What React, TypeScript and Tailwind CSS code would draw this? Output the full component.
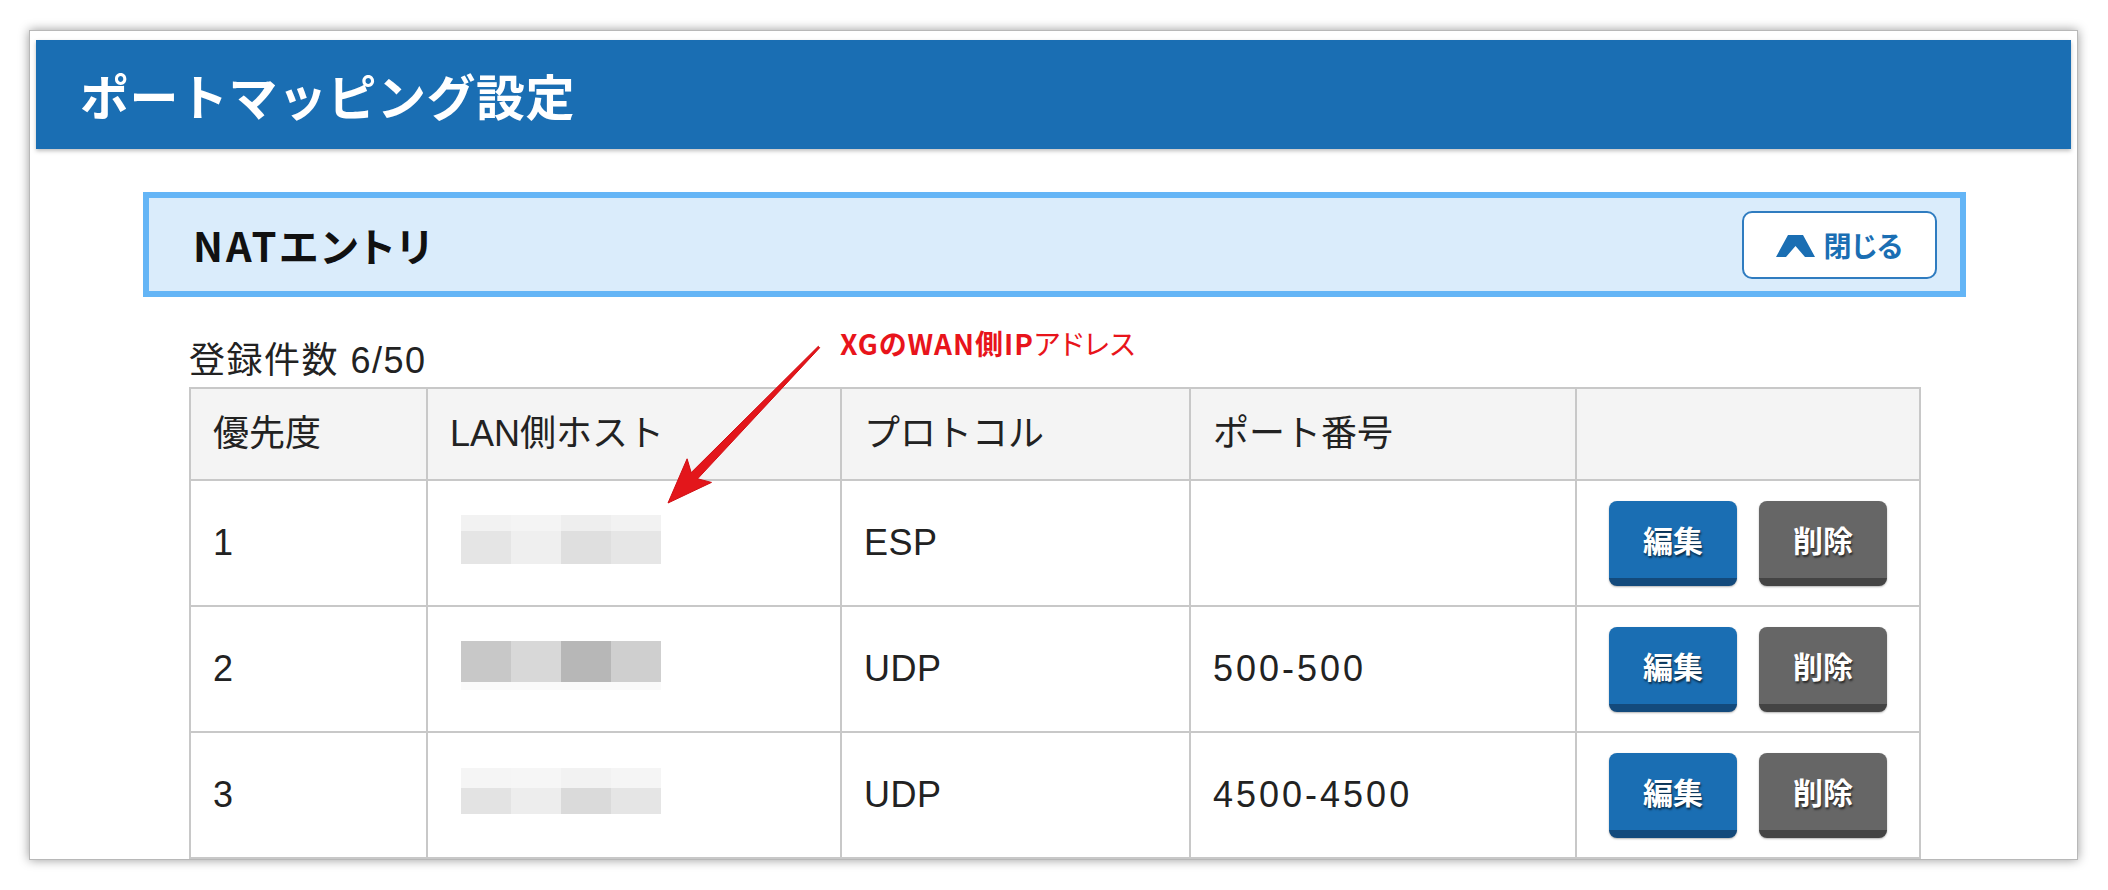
type Blur = { h: number; colors: string[] }[];

const rows: { no: string; proto: string; port: string; blur: Blur }[] = [
  {
    no: "1",
    proto: "ESP",
    port: "",
    blur: [
      { h: 16, colors: ["#f2f2f2", "#f4f4f4", "#eeeeee", "#f2f2f2"] },
      { h: 33, colors: ["#e5e5e5", "#efefef", "#dfdfdf", "#e6e6e6"] },
    ],
  },
  {
    no: "2",
    proto: "UDP",
    port: "500-500",
    blur: [
      { h: 41, colors: ["#c8c8c8", "#d8d8d8", "#b7b7b7", "#cfcfcf"] },
      { h: 8, colors: ["#fafafa", "#fafafa", "#fafafa", "#fafafa"] },
    ],
  },
  {
    no: "3",
    proto: "UDP",
    port: "4500-4500",
    blur: [
      { h: 20, colors: ["#f5f5f5", "#f6f6f6", "#f2f2f2", "#f5f5f5"] },
      { h: 26, colors: ["#e3e3e3", "#ededed", "#dadada", "#e5e5e5"] },
    ],
  },
];

const font = "font-['Liberation_Sans','Noto_Sans_CJK_JP',sans-serif]";

const BlurredHost = ({ blur }: { blur: Blur }) => (
  <div className="ml-[11px] mb-[8px] flex w-[200px] flex-col">
    {blur.map((strip, i) => (
      <div key={i} className="flex" style={{ height: strip.h }}>
        {strip.colors.map((c, j) => (
          <div key={j} className="w-[50px]" style={{ backgroundColor: c }} />
        ))}
      </div>
    ))}
  </div>
);

const ActionButtons = () => (
  <div className="flex justify-center gap-[22px]">
    <button className="h-[85px] w-[128px] rounded-[8px] border-b-[8px] border-[#134a7c] bg-[#1a6eb3] font-['Noto_Sans_CJK_JP',sans-serif] text-[30px] font-bold text-white shadow-[0_1px_2px_rgba(0,0,0,0.3)] [text-shadow:1px_2px_2px_rgba(0,0,0,0.6)]">
      編集
    </button>
    <button className="h-[85px] w-[128px] rounded-[8px] border-b-[8px] border-[#444] bg-[#666] font-['Noto_Sans_CJK_JP',sans-serif] text-[30px] font-bold text-white shadow-[0_1px_2px_rgba(0,0,0,0.3)] [text-shadow:1px_2px_2px_rgba(0,0,0,0.6)]">
      削除
    </button>
  </div>
);

const App = () => {
  return (
    <div className={`relative h-[890px] w-[2108px] overflow-hidden bg-white pt-[30px] ${font}`}>
      <div className="ml-[29px] h-[830px] w-[2049px] overflow-hidden border border-[#b8b8b8] bg-white pt-[9px] shadow-[0_0_10px_rgba(0,0,0,0.4)]">
        {/* page header */}
        <div className="mx-[6px] flex h-[109px] items-center bg-[#1a6eb3] pl-[44px] shadow-[0_2px_4px_rgba(0,0,0,0.25)]">
          <h1 className="font-['Noto_Sans_CJK_JP',sans-serif] text-[49px] font-bold leading-none tracking-[0.5px] text-white">
            ポートマッピング設定
          </h1>
        </div>

        <div className="pl-[113px] pr-[111px] pt-[43px]">
          {/* section bar */}
          <div className="flex h-[105px] items-center justify-between border-[6px] border-[#64b5f6] bg-[#daecfb] pl-[44px] pr-[23px]">
            <h2 className="font-['Noto_Sans_CJK_JP',sans-serif] text-[40px] font-bold leading-none tracking-[3px] text-[#111] [font-feature-settings:'palt']">
              NATエントリ
            </h2>
            <button className="flex h-[68px] w-[195px] items-center justify-center gap-[8px] rounded-[10px] border-2 border-[#2f7cc0] bg-white">
              <svg width="39" height="22" viewBox="0 0 39 22" className="mt-[2px]">
                <polygon points="0,22 12,0 27,0 39,22 29,22 19.5,11 10,22" fill="#1a6eb3" />
              </svg>
              <span className="font-['Noto_Sans_CJK_JP',sans-serif] text-[28px] font-bold leading-none text-[#1a6eb3] [font-feature-settings:'palt']">
                閉じる
              </span>
            </button>
          </div>

          <div className="px-[46px]">
            <p className="mt-[42px] text-[36px] leading-[44px] tracking-[1.5px] text-[#222]">登録件数 6/50</p>

            <table className="mt-[4px] w-[1730px] table-fixed border-collapse text-[36px] text-[#222]">
              <colgroup>
                <col className="w-[237px]" />
                <col className="w-[414px]" />
                <col className="w-[349px]" />
                <col className="w-[386px]" />
                <col className="w-[344px]" />
              </colgroup>
              <thead>
                <tr className="h-[92px] bg-[#f4f4f4]">
                  <th className="border-2 border-[#c8c8c8] pl-[22px] text-left font-normal">優先度</th>
                  <th className="border-2 border-[#c8c8c8] pl-[22px] text-left font-normal">LAN側ホスト</th>
                  <th className="border-2 border-[#c8c8c8] pl-[22px] text-left font-normal">プロトコル</th>
                  <th className="border-2 border-[#c8c8c8] pl-[22px] text-left font-normal">ポート番号</th>
                  <th className="border-2 border-[#c8c8c8]" />
                </tr>
              </thead>
              <tbody>
                {rows.map((r) => (
                  <tr key={r.no} className="h-[126px]">
                    <td className="border-2 border-[#c8c8c8] pl-[22px]">{r.no}</td>
                    <td className="border-2 border-[#c8c8c8] pl-[22px]">
                      <BlurredHost blur={r.blur} />
                    </td>
                    <td className="border-2 border-[#c8c8c8] pl-[22px] tracking-[0.5px]">{r.proto}</td>
                    <td className="border-2 border-[#c8c8c8] pl-[22px] tracking-[3px]">{r.port}</td>
                    <td className="border-2 border-[#c8c8c8]">
                      <ActionButtons />
                    </td>
                  </tr>
                ))}
                {/* next row, cut off by the bottom of the screenshot */}
                <tr className="h-[126px]">
                  <td className="border-2 border-[#c8c8c8]" />
                  <td className="border-2 border-[#c8c8c8]" />
                  <td className="border-2 border-[#c8c8c8]" />
                  <td className="border-2 border-[#c8c8c8]" />
                  <td className="border-2 border-[#c8c8c8]" />
                </tr>
              </tbody>
            </table>
          </div>
        </div>
      </div>

      {/* red annotation laid over the screenshot */}
      <p className="absolute left-[840px] top-[327px] font-['Noto_Sans_CJK_JP',sans-serif] text-[28px] leading-[32px] tracking-[1px] text-[#e8141b] [font-feature-settings:'palt']">
        <span className="font-bold">XGのWAN側IP</span>アドレス
      </p>
      <svg className="absolute left-0 top-0" width="2108" height="890" viewBox="0 0 2108 890">
        <polygon
          points="819.7,347.7 697.6,478.8 711.5,482.4 668,503 687.1,458.8 691.2,472.6 818.3,346.3"
          fill="#e3161b"
          stroke="#d10f14"
          strokeWidth="1"
          strokeLinejoin="round"
        />
      </svg>
    </div>
  );
};

export default App;
